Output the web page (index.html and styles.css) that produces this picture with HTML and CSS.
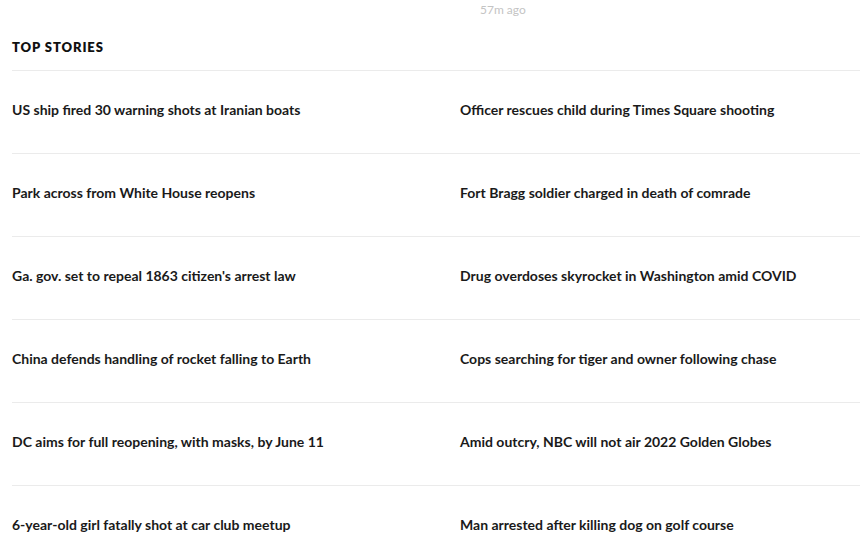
FILE: index.html
```html
<!DOCTYPE html>
<html>
<head>
<meta charset="utf-8">
<link rel="stylesheet" href="styles.css">
</head>
<body>
<div class="page">
  <div class="prev"><span class="time">57m ago</span></div>
  <h2 class="section-title">TOP STORIES</h2>
  <div class="stories">
    <div class="row"><a class="story">US ship fired 30 warning shots at Iranian boats</a><a class="story">Officer rescues child during Times Square shooting</a></div>
    <div class="row"><a class="story">Park across from White House reopens</a><a class="story">Fort Bragg soldier charged in death of comrade</a></div>
    <div class="row"><a class="story">Ga. gov. set to repeal 1863 citizen's arrest law</a><a class="story">Drug overdoses skyrocket in Washington amid COVID</a></div>
    <div class="row"><a class="story">China defends handling of rocket falling to Earth</a><a class="story">Cops searching for tiger and owner following chase</a></div>
    <div class="row"><a class="story">DC aims for full reopening, with masks, by June 11</a><a class="story">Amid outcry, NBC will not air 2022 Golden Globes</a></div>
    <div class="row"><a class="story">6-year-old girl fatally shot at car club meetup</a><a class="story">Man arrested after killing dog on golf course</a></div>
  </div>
</div>
</body>
</html>
```

FILE: styles.css
```css
html, body {
  margin: 0;
  padding: 0;
  background: #fff;
}
body {
  font-family: Lato, "Liberation Sans", sans-serif;
  color: #1a1a1a;
  overflow: hidden;
}
.page {
  padding-left: 12px;
  width: 848px;
}
.prev {
  height: 20px;
  padding-left: 468px;
}
.time {
  display: block;
  font-size: 12px;
  line-height: 20px;
  color: #c4c4c4;
}
.section-title {
  margin: 0;
  font-size: 13px;
  font-weight: 800;
  letter-spacing: 0.9px;
  line-height: 18px;
  padding-top: 18px;
  padding-bottom: 14px;
  border-bottom: 1px solid #ebebeb;
  color: #111;
}
.row {
  display: grid;
  grid-template-columns: 448px 1fr;
  padding: 30px 0 34px;
  border-bottom: 1px solid #ebebeb;
}
.story {
  font-size: 14px;
  font-weight: 700;
  line-height: 18px;
  color: #1a1a1a;
}
```
